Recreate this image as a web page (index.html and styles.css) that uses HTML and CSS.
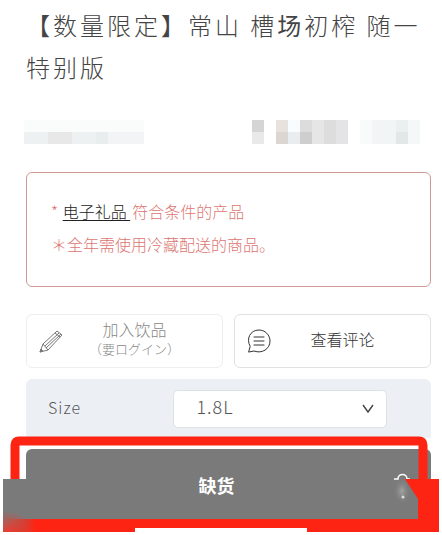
FILE: index.html
```html
<!DOCTYPE html>
<html lang="zh-CN">
<head>
  <meta charset="UTF-8" />
  <meta name="viewport" content="width=device-width, initial-scale=1.0"/>
  <title>常山 槽场初榨</title>
  <link rel="stylesheet" href="styles.css">
</head>
<body>
  <main class="product">
    <h1 class="product-title">【数量限定】常山 槽<b>场</b>初榨 随一<br>特别版</h1>

    <!-- Pixelated code and price -->
    <div class="meta">
      <svg class="mosaic" width="120" height="24" shape-rendering="crispEdges" aria-hidden="true">
        <path fill="#fafbfb" d="M0 0h120v12H0z"/>
        <path fill="#eef1f1" d="M0 12h120v12H0z"/>
        <path fill="#e7e8e7" d="M24 12h24v12H24z"/>
        <path fill="#e8edee" d="M72 12h12v12H72z"/>
        <path fill="#f2f4f5" d="M84 12h36v12H84z"/>
      </svg>
      <svg class="mosaic" width="168" height="24" shape-rendering="crispEdges" aria-hidden="true">
        <path fill="#d5d5d5" d="M0 0h12v12H0z"/>
        <path fill="#e9e9e9" d="M0 12h12v12H0z"/>
        <path fill="#e8e2df" d="M24 0h12v12H24z"/>
        <path fill="#dcd6d3" d="M24 12h12v12H24z"/>
        <path fill="#f8fcfe" d="M36 0h12v12H36z"/>
        <path fill="#e9edf0" d="M36 12h12v12H36z"/>
        <path fill="#dcdcdd" d="M48 0h12v12H48z"/>
        <path fill="#cecece" d="M48 12h12v12H48z"/>
        <path fill="#e6e6e6" d="M60 0h12v24H60z"/>
        <path fill="#dddddd" d="M72 0h12v24H72z"/>
        <path fill="#e4e4e6" d="M84 0h12v24H84z"/>
        <path fill="#f9fafa" d="M108 0h12v24h-12z"/>
        <path fill="#f2f5f5" d="M120 0h24v24h-24z"/>
        <path fill="#eaefef" d="M144 0h12v12h-12z"/>
        <path fill="#e2e8e8" d="M144 12h12v12h-12z"/>
        <path fill="#f5f8f9" d="M156 0h12v24h-12z"/>
      </svg>
    </div>

    <div class="notice">
      <p>* <a href="#">电子礼品 </a>符合条件的产品</p>
      <p>＊全年需使用冷藏配送的商品。</p>
    </div>

    <div class="actions">
      <button class="action-btn" type="button" disabled>
        <svg width="24" height="24" viewBox="0 0 24 24" fill="none" stroke="#777" stroke-linejoin="round" aria-hidden="true">
          <path d="M1 23l3-8L18 2l5 4L9 21z"/>
          <path d="M4 15l5 6M6 17L20 4M7 19L22 5M16 4l5 4"/>
          <path fill="#777" d="M1 23l1-3 2 2z"/>
        </svg>
        <span class="action-text">加入饮品<small>（要ログイン）</small></span>
      </button>
      <button class="action-btn" type="button">
        <svg width="24" height="24" viewBox="0 0 24 24" fill="none" stroke="currentColor" stroke-linecap="round" stroke-linejoin="round" aria-hidden="true">
          <path d="M3 17C-1 10 3 1 12 1c6 0 11 5 11 11 0 8-8 13-16 10l-5 1z"/>
          <path d="M7 8h10M7 12h10M7 16h10"/>
        </svg>
        <span class="action-text">查看评论</span>
      </button>
    </div>

    <div class="size-row">
      <label for="size">Size</label>
      <div class="select-wrap">
        <select id="size">
          <option>1.8L</option>
        </select>
        <svg class="chevron" width="12" height="10" viewBox="0 0 12 10" fill="none" stroke="#444" stroke-width="1.4" aria-hidden="true">
          <path d="M1 1l5 7 5-7"/>
        </svg>
      </div>
    </div>

    <button class="buy-btn" type="button">缺货</button>
  </main>

  <!-- Red marker drawn over the sold out button -->
  <div class="marker">
    <svg width="100%" height="96" viewBox="0 0 442 96" preserveAspectRatio="none" aria-hidden="true">
      <defs>
        <radialGradient id="smear" gradientUnits="userSpaceOnUse" cx="8" cy="98" r="28" gradientTransform="translate(0 5)">
          <stop offset="0.2" stop-color="#ee3a2c"/>
          <stop offset="1" stop-color="#7a7a7a"/>
        </radialGradient>
        <linearGradient id="fade">
          <stop offset="0" stop-color="#fe2414" stop-opacity="0"/>
          <stop offset="1" stop-color="#fe2414"/>
        </linearGradient>
        <radialGradient id="glow">
          <stop offset="0" stop-color="#a4a4a4"/>
          <stop offset="1" stop-color="#7a7a7a" stop-opacity="0"/>
        </radialGradient>
      </defs>
      <ellipse cx="402" cy="55" rx="9" ry="14" fill="url(#glow)"/>
      <path d="M394 43h4c0-6 9-6 9 0h3" fill="none" stroke="#fff" stroke-width="1.5"/>
      <circle cx="403" cy="61" r="1.5" fill="#ddd"/>
      <path d="M15 43V9q0-4 4-4h400q4 0 4 4v34" fill="none" stroke="#fe2414" stroke-width="9"/>
      <path fill="url(#smear)" d="M3 43h24v40h10v13H3z"/>
      <path fill="url(#fade)" d="M6 83h29v13H6z"/>
      <path fill="#fe2414" d="M405 43h34v53H307v-4H135v4H34V83h384V63z"/>
    </svg>
  </div>
</body>
</html>
```

FILE: styles.css
```css
* {
  margin: 0;
  padding: 0;
  box-sizing: border-box;
}

body {
  font-family: "Noto Sans CJK SC", "Noto Sans CJK JP", sans-serif;
  background-color: #fff;
  color: #444;
}

button,
select {
  font-family: inherit;
  color: inherit;
}

.product {
  padding: 4px 11px 0 26px;
}

.product-title {
  font-size: 24px;
  line-height: 42px;
  font-weight: 300;
  letter-spacing: 3px;
}

.meta {
  display: flex;
  justify-content: space-between;
  margin: 32px 11px 28px -2px;
}

.mosaic {
  display: block;
}

.notice {
  padding: 22px 24px 25px;
  border: 1px solid #cf9a94;
  border-radius: 6px;
  color: #dc7672;
  font-size: 16px;
  font-weight: 300;
  line-height: 33px;
}

.notice a {
  margin: 0 2px 0 1px;
  color: #222;
  text-underline-offset: 2px;
  white-space: pre;
}

.actions {
  display: flex;
  gap: 11px;
  margin: 27px 0 11px;
}

.action-btn {
  flex: 1;
  display: flex;
  align-items: center;
  height: 54px;
  padding: 0 12px;
  border: 1px solid #e0e2e2;
  border-radius: 6px;
  background-color: #fff;
  color: #333;
}

.action-btn:disabled {
  border-color: #eee;
  color: #888;
}

.action-text {
  flex: 1;
  padding: 0 4px 4px 0;
  font-size: 16px;
  font-weight: 300;
  line-height: 20px;
  text-align: center;
}

.action-text small {
  display: block;
  font-size: 13px;
}

.size-row {
  display: flex;
  align-items: center;
  justify-content: space-between;
  height: 59px;
  padding: 0 44px 0 22px;
  border-radius: 6px 6px 0 0;
  background-color: #ecf0f5;
  color: #555;
  font-size: 16px;
  font-weight: 300;
  letter-spacing: 1px;
}

.size-row label {
  padding-bottom: 4px;
}

.select-wrap {
  position: relative;
  width: 63%;
}

.size-row select {
  display: block;
  width: 100%;
  height: 38px;
  padding: 0 22px 6px;
  border: 1px solid #dde2e6;
  border-radius: 5px;
  background-color: #fff;
  font-size: 18px;
  font-weight: 300;
  letter-spacing: 1px;
  appearance: none;
}

.chevron {
  position: absolute;
  top: 14px;
  right: 13px;
  pointer-events: none;
}

.buy-btn {
  display: block;
  width: 100%;
  height: 73px;
  margin-top: 11px;
  padding: 0 24px 2px 0;
  border: none;
  border-radius: 6px;
  background-color: #7a7a7a;
  color: #fff;
  font-size: 18px;
  font-weight: 700;
}

.marker {
  position: absolute;
  top: 436px;
  left: 0;
  width: 100%;
  pointer-events: none;
}

.marker svg {
  display: block;
}
```
